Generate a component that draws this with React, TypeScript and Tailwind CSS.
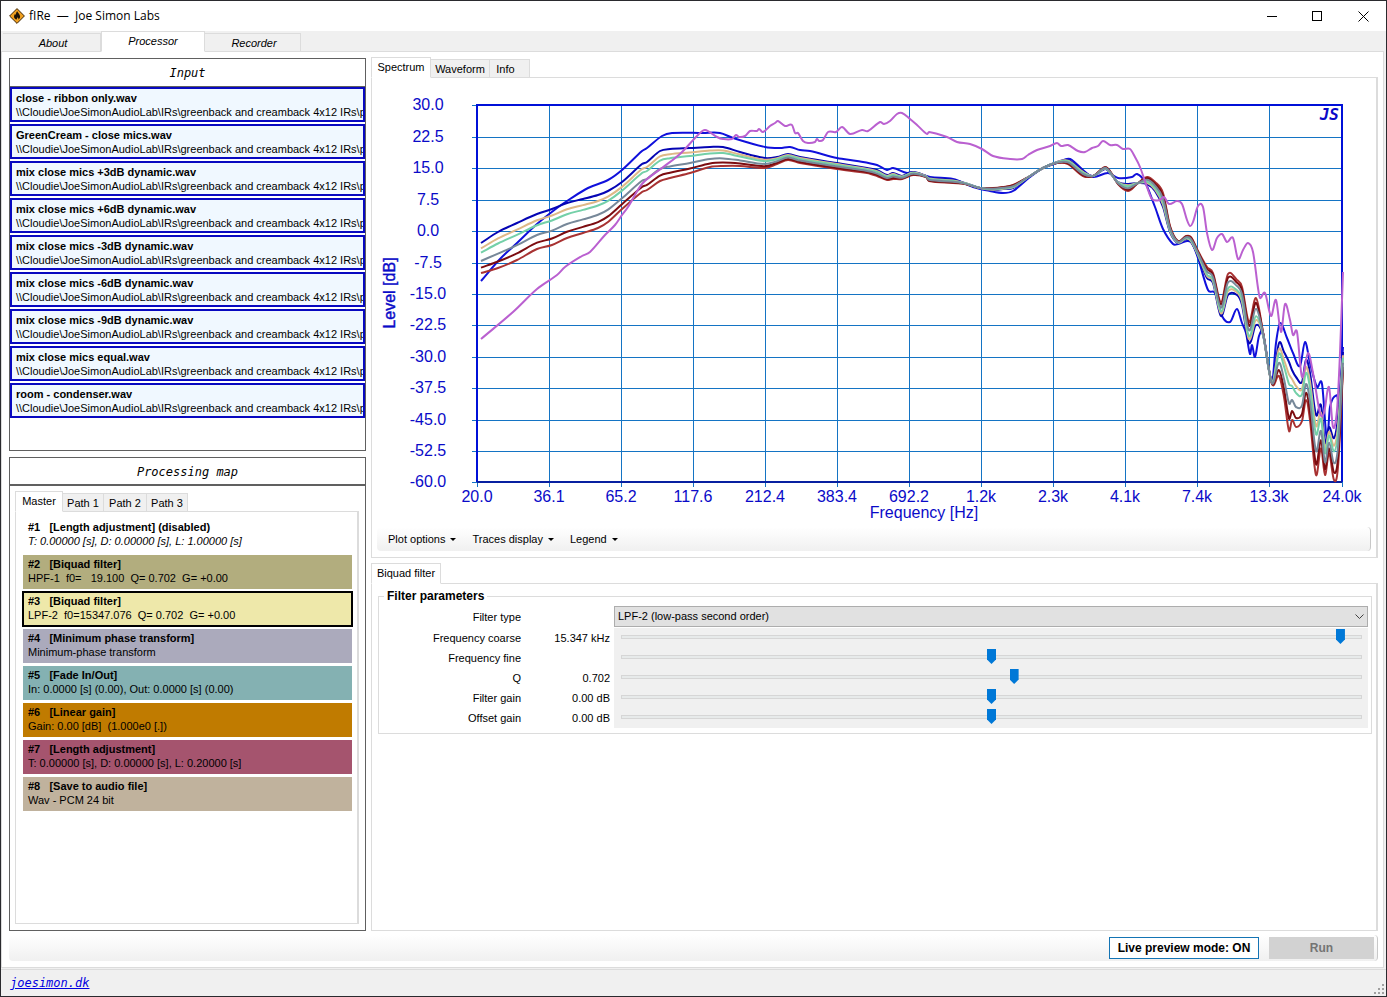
import { useState } from "react"
import clsx from "clsx"

type Point = [number, number]

const FOLDER = "\\\\Cloudie\\JoeSimonAudioLab\\IRs\\greenback and creamback 4x12 IRs\\pro"

const inputFiles = [
  "close - ribbon only.wav",
  "GreenCream - close mics.wav",
  "mix close mics +3dB dynamic.wav",
  "mix close mics +6dB dynamic.wav",
  "mix close mics -3dB dynamic.wav",
  "mix close mics -6dB dynamic.wav",
  "mix close mics -9dB dynamic.wav",
  "mix close mics equal.wav",
  "room - condenser.wav",
]

const steps = [
  { name: "[Length adjustment] (disabled)", detail: "T: 0.00000 [s], D: 0.00000 [s], L: 1.00000 [s]", color: "bg-white italic" },
  { name: "[Biquad filter]", detail: "HPF-1  f0=   19.100  Q= 0.702  G= +0.00", color: "bg-[#b2ad7e]" },
  { name: "[Biquad filter]", detail: "LPF-2  f0=15347.076  Q= 0.702  G= +0.00", color: "bg-[#eee8aa]" },
  { name: "[Minimum phase transform]", detail: "Minimum-phase transform", color: "bg-[#abaabc]" },
  { name: "[Fade In/Out]", detail: "In: 0.0000 [s] (0.00), Out: 0.0000 [s] (0.00)", color: "bg-[#84b1b2]" },
  { name: "[Linear gain]", detail: "Gain: 0.00 [dB]  (1.000e0 [.])", color: "bg-[#c07b00]" },
  { name: "[Length adjustment]", detail: "T: 0.00000 [s], D: 0.00000 [s], L: 0.20000 [s]", color: "bg-[#a5546e]" },
  { name: "[Save to audio file]", detail: "Wav - PCM 24 bit", color: "bg-[#c0b29d]" },
]

const sliders = [
  { id: "coarse", label: "Frequency coarse", value: "15.347 kHz", position: 978 },
  { id: "fine", label: "Frequency fine", value: "", position: 500 },
  { id: "q", label: "Q", value: "0.702", position: 531 },
  { id: "gain", label: "Filter gain", value: "0.00 dB", position: 500 },
  { id: "offset", label: "Offset gain", value: "0.00 dB", position: 500 },
]

const levels = ["30.0", "22.5", "15.0", "7.5", "0.0", "-7.5", "-15.0", "-22.5", "-30.0", "-37.5", "-45.0", "-52.5", "-60.0"]
const frequencies = ["20.0", "36.1", "65.2", "117.6", "212.4", "383.4", "692.2", "1.2k", "2.3k", "4.1k", "7.4k", "13.3k", "24.0k"]

// x, ribbon heavy mix, dynamic heavy mix. The other mixes lie between the two.
const mixes: [number, number, number][] = [
  [481, 243, 273], [498, 232, 268], [517, 223, 260], [537, 214, 249], [552, 209, 245], [567, 203, 238],
  [583, 199, 233], [598, 195, 228], [608, 191, 222], [622, 182, 209], [642, 164, 192], [647, 162, 190],
  [660, 151, 181], [670, 149, 178], [690, 148, 173], [710, 147, 167], [723, 147, 166], [740, 152, 166],
  [765, 158, 168], [777, 157, 164], [788, 154, 160], [800, 157, 163], [837, 163, 169], [867, 168, 173],
  [877, 170, 176], [887, 175, 180], [893, 173, 179], [902, 176, 179], [913, 172, 175], [926, 176, 177],
  [929, 178, 181], [953, 180, 183], [965, 183, 184], [980, 188, 188], [993, 190, 188], [1003, 189, 187],
  [1013, 188, 185], [1030, 176, 176], [1043, 168, 168], [1057, 162, 163], [1068, 160, 164], [1083, 171, 176],
  [1093, 176, 176], [1105, 169, 167], [1110, 173, 171], [1118, 182, 184], [1128, 184, 191], [1137, 183, 184],
  [1147, 184, 177], [1155, 191, 182], [1163, 207, 193], [1170, 232, 226], [1178, 243, 241], [1186, 239, 236],
  [1191, 242, 237], [1198, 256, 251], [1207, 278, 267], [1213, 283, 273], [1221, 316, 302], [1228, 295, 274],
  [1237, 295, 280], [1242, 305, 287], [1249, 343, 322], [1256, 325, 298], [1263, 335, 332], [1272, 382, 384],
  [1279, 343, 376], [1284, 352, 397], [1289, 362, 431], [1292, 370, 420], [1296, 377, 427], [1302, 382, 421],
  [1306, 360, 400], [1310, 373, 420], [1316, 415, 475], [1321, 405, 448], [1325, 443, 475], [1329, 427, 453],
  [1334, 438, 480], [1338, 417, 467], [1343, 352, 370],
]

const ribbon: Point[] = [
  [481, 281], [500, 259], [517, 243], [537, 224], [557, 208], [570, 199], [588, 188], [608, 180], [622, 170],
  [642, 151], [647, 148], [662, 136], [672, 133], [703, 133], [720, 133], [733, 138], [765, 147], [780, 148],
  [790, 147], [800, 150], [810, 151], [837, 158], [857, 161], [877, 165], [887, 170], [893, 168], [907, 173],
  [913, 172], [930, 177], [953, 179], [973, 187], [990, 191], [1003, 193], [1013, 191], [1030, 177], [1043, 168],
  [1057, 163], [1067, 159], [1072, 160], [1083, 170], [1093, 177], [1108, 173], [1118, 178], [1132, 177],
  [1137, 174], [1145, 182], [1155, 207], [1163, 229], [1173, 244], [1178, 244], [1187, 241], [1192, 243],
  [1198, 258], [1208, 290], [1215, 293], [1222, 316], [1230, 322], [1237, 309], [1242, 323], [1246, 333],
  [1250, 354], [1252, 345], [1255, 357], [1259, 336], [1263, 333], [1272, 381], [1276, 343], [1280, 323],
  [1287, 338], [1293, 353], [1300, 366], [1305, 342], [1310, 363], [1317, 387], [1322, 384], [1327, 440],
  [1330, 407], [1337, 395], [1339, 402], [1343, 347],
]

const room: Point[] = [
  [481, 339], [513, 312], [537, 289], [557, 275], [565, 267], [582, 256], [590, 252], [605, 235], [615, 225],
  [622, 215], [628, 207], [642, 184], [662, 168], [680, 154], [698, 135], [705, 130], [717, 137], [723, 139],
  [732, 139], [736, 135], [739, 137], [745, 136], [750, 131], [757, 131], [759, 129], [763, 132], [770, 126],
  [775, 123], [778, 121], [785, 126], [792, 125], [795, 133], [798, 133], [803, 141], [808, 143], [815, 142],
  [817, 139], [819, 141], [823, 140], [828, 132], [836, 132], [842, 127], [850, 134], [862, 130], [868, 131],
  [880, 122], [884, 124], [890, 121], [897, 114], [902, 113], [910, 119], [917, 125], [927, 134], [929, 132],
  [947, 137], [957, 142], [970, 144], [982, 149], [993, 156], [1010, 159], [1022, 159], [1028, 155], [1037, 150],
  [1050, 146], [1057, 143], [1061, 146], [1068, 145], [1078, 151], [1085, 152], [1092, 148], [1098, 146],
  [1103, 141], [1110, 145], [1117, 145], [1123, 149], [1130, 149], [1135, 157], [1140, 167], [1147, 187],
  [1152, 199], [1160, 200], [1164, 197], [1169, 204], [1177, 201], [1182, 204], [1187, 220], [1190, 226],
  [1193, 222], [1198, 206], [1203, 207], [1207, 233], [1212, 250], [1217, 238], [1222, 234], [1227, 242],
  [1233, 238], [1238, 259], [1243, 250], [1248, 243], [1253, 252], [1258, 288], [1260, 298], [1265, 293],
  [1271, 316], [1276, 300], [1281, 332], [1285, 304], [1290, 320], [1293, 335], [1297, 332], [1302, 377],
  [1308, 353], [1313, 373], [1320, 413], [1324, 413], [1329, 387], [1333, 427], [1337, 410], [1340, 353],
  [1343, 272],
]

const mix = (share: number): Point[] => mixes.map(([x, a, b]) => [x, a + (b - a) * share])

const traces: { color: string; points: Point[] }[] = [
  { color: "#1010dc", points: ribbon },
  { color: "#a83232", points: mix(1) },
  { color: "#7c0c10", points: mix(0.82) },
  { color: "#0505b4", points: mix(0) },
  { color: "#deb887", points: mix(0.18) },
  { color: "#74d0a8", points: mix(0.32) },
  { color: "#778899", points: mix(0.6) },
  { color: "#ba60d0", points: room },
]

// smooth line through all the points
function toPath(points: Point[]) {
  let d = `M${points[0][0]} ${points[0][1]}`
  for (let i = 0; i < points.length - 1; i++) {
    const before = points[Math.max(i - 1, 0)]
    const from = points[i]
    const to = points[i + 1]
    const after = points[Math.min(i + 2, points.length - 1)]
    const step = (to[0] - from[0]) / 3
    const slopeFrom = (to[1] - before[1]) / (to[0] - before[0])
    const slopeTo = (after[1] - from[1]) / (after[0] - from[0])
    d += `C${from[0] + step} ${from[1] + slopeFrom * step} ${to[0] - step} ${to[1] - slopeTo * step} ${to[0]} ${to[1]}`
  }
  return d
}

const SpectrumChart = () => {
  const xAt = (i: number) => 477 + Math.floor((i * 865) / 12)
  const yAt = (i: number) => 105 + Math.ceil((i * 377) / 12)

  return (
    <svg viewBox="377 84 994 443" className="block w-full" role="img" aria-label="Spectrum">
      <g stroke="#1474c4" shapeRendering="crispEdges">
        {frequencies.map((label, i) => (
          <line key={label} x1={xAt(i)} x2={xAt(i)} y1={105} y2={487} />
        ))}
        {levels.map((label, i) => (
          <line key={label} x1={472} x2={1342} y1={yAt(i)} y2={yAt(i)} />
        ))}
      </g>
      <path d="M477 482V105H1342V482" fill="none" stroke="#0010d8" strokeWidth="2" shapeRendering="crispEdges" />
      <path d="M477 482H1342" stroke="#0820a0" strokeWidth="2" shapeRendering="crispEdges" />
      <g fill="none" strokeWidth="2" strokeLinejoin="round">
        {traces.map((trace) => (
          <path key={trace.color} d={toPath(trace.points)} stroke={trace.color} />
        ))}
      </g>
      <g fill="#0a0ac8" fontSize="16" textAnchor="middle" className="font-['Liberation_Sans',sans-serif]">
        {levels.map((label, i) => (
          <text key={label} x={428} y={yAt(i) + 5}>{label}</text>
        ))}
        {frequencies.map((label, i) => (
          <text key={label} x={xAt(i)} y={502}>{label}</text>
        ))}
        <text x={924} y={518}>Frequency [Hz]</text>
        <text transform="translate(395 293) rotate(-90)" stroke="#0a0ac8" strokeWidth="0.4">Level [dB]</text>
      </g>
      <text x={1339} y={120} textAnchor="end" fontSize="16" fill="#0a0ac8" className="font-['DejaVu_Sans_Mono',monospace] font-bold italic">
        JS
      </text>
    </svg>
  )
}

const FireIcon = () => (
  <svg viewBox="0 0 16 16" className="h-4 w-4">
    <path d="M8 .6 15.4 8 8 15.4.6 8Z" fill="#f0a020" stroke="#3a2408" strokeLinejoin="round" />
    <path d="M8.2 3.2c.3 1.5 2.9 2.9 2.9 5.4 0 1.3-.7 2.3-1.7 2.9.2-1-.1-1.7-.8-2.3-.1.9-.9 1.2-.8 2.3-1.6-.3-2.8-1.3-2.8-3 0-1.2.7-1.9 1.2-2.7.1.6.3.9.7 1.2.1-1.4.3-2.7 1.3-3.8Z" fill="#1c1206" />
  </svg>
)

type TabProps = { label: string; active?: boolean; className?: string; onClick?: () => void }

const Tab = ({ label, active, className, onClick }: TabProps) => (
  <button
    role="tab"
    aria-selected={!!active}
    onClick={onClick}
    className={clsx(
      "border border-[#dcdcdc] text-[11px] leading-4",
      active ? "relative -mb-px h-[21px] border-b-white bg-white pb-[2px]" : "h-[18px] border-b-0 border-l-0 bg-[#f0f0f0]",
      className
    )}
  >
    {label}
  </button>
)

const TitleBar = () => (
  <header className="flex h-[30px] shrink-0 items-center justify-between bg-white pl-2">
    <div className="flex items-center gap-1">
      <FireIcon />
      <h1 className="whitespace-pre font-['Open_Sans',sans-serif] text-[12px]">fIRe  —  Joe Simon Labs</h1>
    </div>
    <div className="flex">
      <button aria-label="Minimize" className="flex h-[30px] w-[46px] items-center justify-center">
        <svg width="11" height="11" shapeRendering="crispEdges"><path d="M0 5.5H10" stroke="black" /></svg>
      </button>
      <button aria-label="Maximize" className="flex h-[30px] w-[45px] items-center justify-center">
        <svg width="11" height="11" shapeRendering="crispEdges"><path d="M.5 .5H9.5V9.5H.5Z" stroke="black" fill="none" /></svg>
      </button>
      <button aria-label="Close" className="flex h-[30px] w-[46px] items-center justify-center">
        <svg width="11" height="11"><path d="M.5 .5 10.5 10.5M10.5 .5 .5 10.5" stroke="black" /></svg>
      </button>
    </div>
  </header>
)

const InputPanel = () => (
  <section className="flex h-[393px] shrink-0 flex-col border border-[#606060]">
    <h2 className="h-7 border-b border-[#606060] text-center font-['DejaVu_Sans_Mono',monospace] text-[12px] leading-7 italic">
      Input
    </h2>
    <ul className="flex flex-col gap-[2px]">
      {inputFiles.map((file) => (
        <li key={file} className="h-[35px] overflow-hidden border-2 border-[#0808c0] bg-[#f0f8ff] pt-[2px] pl-1 whitespace-nowrap">
          <p className="text-[11px] leading-[14px] font-bold">{file}</p>
          <p className="text-[11px] leading-[14px]">{FOLDER}</p>
        </li>
      ))}
    </ul>
  </section>
)

const ProcessingMap = () => {
  const [selected, setSelected] = useState(2)

  return (
    <section className="flex flex-1 flex-col border border-[#606060]">
      <h2 className="h-7 border-b-2 border-[#606060] text-center font-['DejaVu_Sans_Mono',monospace] text-[12px] leading-7 italic">
        Processing map
      </h2>
      <div className="flex flex-1 flex-col px-[5px] pt-[5px] pb-[6px]">
        <div role="tablist" className="flex items-end">
          <Tab label="Master" active className="w-12" />
          <Tab label="Path 1" className="w-[41px]" />
          <Tab label="Path 2" className="w-[43px]" />
          <Tab label="Path 3" className="w-[41px]" />
        </div>
        <ul className="mr-px flex flex-1 flex-col gap-[3px] border border-r-2 border-[#dcdcdc] pt-[6px] pr-[5px] pl-[7px]">
          {steps.map((step, i) => (
            <li key={i}>
              <button
                onClick={() => setSelected(i)}
                className={clsx(
                  "block h-[34px] w-full overflow-hidden pb-[2px] pl-[5px] text-left whitespace-pre text-black",
                  selected === i && "outline-2 -outline-offset-1 outline-black",
                  step.color
                )}
              >
                <span className="block text-[11px] leading-[14px] font-bold not-italic">{`#${i + 1}   ${step.name}`}</span>
                <span className="block text-[11px] leading-[14px]">{step.detail}</span>
              </button>
            </li>
          ))}
        </ul>
      </div>
    </section>
  )
}

const MenuButton = ({ label }: { label: string }) => (
  <button className="flex items-center gap-[5px] text-[11px]">
    {label}
    <svg width="6" height="3"><path d="M0 0H6L3 3Z" /></svg>
  </button>
)

const FilterForm = () => {
  const [values, setValues] = useState(sliders.map((s) => s.position))

  return (
    <fieldset className="mt-1 mr-1 ml-[6px] border border-[#dcdcdc] pr-[3px] pb-[5px] pl-[3px]">
      <legend className="ml-[2px] h-4 px-[3px] text-[12px] leading-4 font-bold">Filter parameters</legend>
      <div className="mt-[2px] grid grid-cols-[139px_89px_1fr] text-right text-[11px]">
        <label htmlFor="type" className="col-span-2 pr-[89px] leading-[22px]">Filter type</label>
        <div className="relative ml-1">
          <select id="type" className="block h-[21px] w-full appearance-none border border-[#adadad] bg-[#e1e1e1] px-[3px] text-left">
            <option>LPF-2 (low-pass second order)</option>
            <option>HPF-1</option>
          </select>
          <svg width="9" height="6" className="pointer-events-none absolute top-2 right-1">
            <path d="M.5 .5 4.5 4.5 8.5 .5" fill="none" stroke="#404040" />
          </svg>
        </div>
        {sliders.map((slider, i) => (
          <div key={slider.id} className="col-span-3 grid h-5 grid-cols-subgrid leading-5">
            <label htmlFor={slider.id}>{slider.label}</label>
            <output htmlFor={slider.id}>{slider.value}</output>
            <div className="ml-1 flex h-5 bg-[#f0f0f0] pr-[6px] pl-[7px]">
              <input
                id={slider.id}
                type="range"
                min={0}
                max={1000}
                value={values[i]}
                onChange={(e) => setValues(values.map((v, n) => (n === i ? Number(e.target.value) : v)))}
                className="h-[18px] w-full appearance-none bg-transparent [&::-webkit-slider-runnable-track]:h-1 [&::-webkit-slider-runnable-track]:border [&::-webkit-slider-runnable-track]:border-[#d6d6d6] [&::-webkit-slider-runnable-track]:bg-[#e7eaea] [&::-webkit-slider-thumb]:-mt-[7px] [&::-webkit-slider-thumb]:h-[15px] [&::-webkit-slider-thumb]:w-[9px] [&::-webkit-slider-thumb]:appearance-none [&::-webkit-slider-thumb]:bg-[#0078d7] [&::-webkit-slider-thumb]:[clip-path:polygon(0_0,100%_0,100%_70%,50%_100%,0_70%)]"
              />
            </div>
          </div>
        ))}
      </div>
    </fieldset>
  )
}

const SizeGrip = () => (
  <svg width="10" height="10" fill="#a0a0a0" shapeRendering="crispEdges">
    <path d="M8 0h2v2h-2zM4 4h2v2h-2zM8 4h2v2h-2zM0 8h2v2h-2zM4 8h2v2h-2zM8 8h2v2h-2z" />
  </svg>
)

const App = () => {
  return (
    <div className="flex min-h-screen flex-col border border-[#2a2a2e] bg-[#f0f0f0] font-['Liberation_Sans',sans-serif] text-black">
      <TitleBar />
      <nav role="tablist" className="flex h-5 shrink-0 items-end pl-[2px] italic">
        <Tab label="About" className="w-[98px] border-l pl-[3px]" />
        <Tab label="Processor" active className="w-[104px]" />
        <Tab label="Recorder" className="w-24 pl-[3px]" />
      </nav>
      <main className="mr-[2px] flex flex-1 flex-col border border-[#dcdcdc] bg-white pt-[5px] pr-[5px] pl-[7px]">
        <div className="flex flex-1 gap-[5px]">
          <div className="flex w-[357px] shrink-0 flex-col gap-[6px] pt-px">
            <InputPanel />
            <ProcessingMap />
          </div>
          <div className="flex min-w-0 flex-1 flex-col gap-[5px]">
            <section>
              <div role="tablist" className="flex items-end">
                <Tab label="Spectrum" active className="w-[60px]" />
                <Tab label="Waveform" className="w-[59px]" />
                <Tab label="Info" className="w-10 pr-2" />
              </div>
              <div className="border border-r-2 border-[#dcdcdc] px-[5px] pt-[6px] pb-[6px]">
                <SpectrumChart />
                <div className="flex h-6 items-center gap-4 rounded-sm border-r border-[#c8c8c8] bg-linear-to-b from-white to-[#f0f0f0] pl-[11px]">
                  <MenuButton label="Plot options" />
                  <MenuButton label="Traces display" />
                  <MenuButton label="Legend" />
                </div>
              </div>
            </section>
            <section className="flex flex-1 flex-col">
              <div role="tablist" className="flex items-end">
                <Tab label="Biquad filter" active className="w-[70px]" />
              </div>
              <div className="flex-1 border border-r-2 border-[#dcdcdc]">
                <FilterForm />
              </div>
            </section>
          </div>
        </div>
        <div className="mt-1 mb-[6px] flex h-[26px] items-center justify-end gap-[10px] rounded-sm border-r border-[#c8c8c8] bg-linear-to-b from-white to-[#f0f0f0] pr-[3px]">
          <button className="h-[22px] w-[150px] border border-[#1474b4] bg-white text-[12px] font-bold">Live preview mode: ON</button>
          <button disabled className="h-[22px] w-[105px] bg-[#d2d2d2] text-[12px] font-bold text-[#747474]">Run</button>
        </div>
      </main>
      <footer className="mt-px flex h-[27px] shrink-0 items-center justify-between border-t border-[#dcdcdc] pr-[2px] pl-[9px]">
        <a href="#joesimon" className="font-['DejaVu_Sans_Mono',monospace] text-[12px] text-[#0000e0] italic underline">joesimon.dk</a>
        <div className="self-end pb-[2px]"><SizeGrip /></div>
      </footer>
    </div>
  )
}

export default App
